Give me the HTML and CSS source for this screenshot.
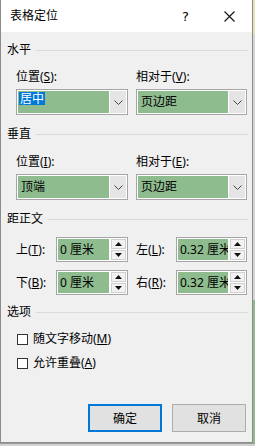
FILE: index.html
```html
<!DOCTYPE html>
<html lang="zh">
<head>
<meta charset="utf-8">
<link rel="stylesheet" href="styles.css">
</head>
<body>
<div class="screen">
  <div class="row">
    <div class="dialog">
      <div class="titlebar">
        <span class="title">表格定位</span>
        <span class="tbtn help">?</span>
        <span class="tbtn close"><svg width="11" height="11" viewBox="0 0 11 11"><path d="M0.5 0.5 L10.5 10.5 M10.5 0.5 L0.5 10.5" stroke="#111" stroke-width="1.1" fill="none"/></svg></span>
      </div>
      <div class="content">
        <div class="ghead g1"><span>水平</span><i></i></div>
        <div class="pair">
          <div class="field">
            <div class="lbl">位置(<u>S</u>):</div>
            <div class="select">
              <div class="val edit"><span class="sel">居中</span></div>
              <div class="drop"><svg width="9" height="5" viewBox="0 0 9 5"><path d="M0.5 0.5 L4.5 4.5 L8.5 0.5" stroke="#444" stroke-width="1" fill="none"/></svg></div>
            </div>
          </div>
          <div class="field">
            <div class="lbl">相对于(<u>V</u>):</div>
            <div class="select">
              <div class="val"><span class="txt">页边距</span></div>
              <div class="drop"><svg width="9" height="5" viewBox="0 0 9 5"><path d="M0.5 0.5 L4.5 4.5 L8.5 0.5" stroke="#444" stroke-width="1" fill="none"/></svg></div>
            </div>
          </div>
        </div>

        <div class="ghead g2"><span>垂直</span><i></i></div>
        <div class="pair p2">
          <div class="field">
            <div class="lbl">位置(<u>I</u>):</div>
            <div class="select">
              <div class="val"><span class="txt">顶端</span></div>
              <div class="drop"><svg width="9" height="5" viewBox="0 0 9 5"><path d="M0.5 0.5 L4.5 4.5 L8.5 0.5" stroke="#444" stroke-width="1" fill="none"/></svg></div>
            </div>
          </div>
          <div class="field">
            <div class="lbl">相对于(<u>E</u>):</div>
            <div class="select">
              <div class="val"><span class="txt">页边距</span></div>
              <div class="drop"><svg width="9" height="5" viewBox="0 0 9 5"><path d="M0.5 0.5 L4.5 4.5 L8.5 0.5" stroke="#444" stroke-width="1" fill="none"/></svg></div>
            </div>
          </div>
        </div>

        <div class="ghead g3"><span>距正文</span><i></i></div>
        <div class="pair s1">
          <div class="sfield">
            <span class="slbl">上(<u>T</u>):</span>
            <div class="spin">
              <div class="sval">0 厘米</div>
              <div class="arrows">
                <span class="arr"><svg width="7" height="4" viewBox="0 0 7 4"><path d="M3.5 0 L7 4 L0 4 Z" fill="#111"/></svg></span>
                <span class="arr"><svg width="7" height="4" viewBox="0 0 7 4"><path d="M0 0 L7 0 L3.5 4 Z" fill="#111"/></svg></span>
              </div>
            </div>
          </div>
          <div class="sfield">
            <span class="slbl">左(<u>L</u>):</span>
            <div class="spin">
              <div class="sval">0.32 厘米</div>
              <div class="arrows">
                <span class="arr"><svg width="7" height="4" viewBox="0 0 7 4"><path d="M3.5 0 L7 4 L0 4 Z" fill="#111"/></svg></span>
                <span class="arr"><svg width="7" height="4" viewBox="0 0 7 4"><path d="M0 0 L7 0 L3.5 4 Z" fill="#111"/></svg></span>
              </div>
            </div>
          </div>
        </div>
        <div class="pair s2">
          <div class="sfield">
            <span class="slbl">下(<u>B</u>):</span>
            <div class="spin">
              <div class="sval">0 厘米</div>
              <div class="arrows">
                <span class="arr"><svg width="7" height="4" viewBox="0 0 7 4"><path d="M3.5 0 L7 4 L0 4 Z" fill="#111"/></svg></span>
                <span class="arr"><svg width="7" height="4" viewBox="0 0 7 4"><path d="M0 0 L7 0 L3.5 4 Z" fill="#111"/></svg></span>
              </div>
            </div>
          </div>
          <div class="sfield">
            <span class="slbl">右(<u>R</u>):</span>
            <div class="spin">
              <div class="sval">0.32 厘米</div>
              <div class="arrows">
                <span class="arr"><svg width="7" height="4" viewBox="0 0 7 4"><path d="M3.5 0 L7 4 L0 4 Z" fill="#111"/></svg></span>
                <span class="arr"><svg width="7" height="4" viewBox="0 0 7 4"><path d="M0 0 L7 0 L3.5 4 Z" fill="#111"/></svg></span>
              </div>
            </div>
          </div>
        </div>

        <div class="ghead g4"><span>选项</span><i></i></div>
        <div class="check c1"><span class="box"></span><span>随文字移动(<u>M</u>)</span></div>
        <div class="check c2"><span class="box"></span><span>允许重叠(<u>A</u>)</span></div>

        <div class="buttons">
          <button class="btn primary">确定</button>
          <button class="btn">取消</button>
        </div>
      </div>
    </div>
    <div class="edge"></div>
  </div>
  <div class="bottom"></div>
</div>
</body>
</html>
```

FILE: styles.css
```css
* { box-sizing: border-box; }
html, body { margin: 0; padding: 0; }
body {
  width: 255px;
  height: 446px;
  overflow: hidden;
  font-family: "Noto Sans", "Noto Sans CJK SC", sans-serif;
  font-size: 12px;
  color: #000;
  background: #c8c8c8;
}
.screen { display: flex; flex-direction: column; width: 255px; height: 446px; }
.row { display: flex; height: 443px; }
.edge {
  width: 2px;
  background: linear-gradient(to bottom, #e8e2b4 0, #e8e2b4 34px, #d6d6d6 34px, #d6d6d6 300px, #8fbc8f 300px);
}
.bottom { height: 3px; background: #d2d2d2; border-top: 1px solid #9a9a9a; }

.dialog {
  width: 253px;
  height: 443px;
  border: 1px solid #8c8c8c;
  border-top: none;
  background: #f0f0f0;
  display: flex;
  flex-direction: column;
}
.titlebar {
  height: 32px;
  background: #fff;
  display: flex;
  align-items: center;
  flex: none;
}
.title { padding-left: 9px; font-size: 12px; line-height: 16px; }
.tbtn { width: 46px; height: 32px; display: flex; align-items: center; justify-content: center; }
.help { margin-left: auto; padding-left: 5px; font-family: "DejaVu Sans", sans-serif; font-size: 13px; }
.close { padding-top: 1px; }

.content {
  flex: 1;
  display: flex;
  flex-direction: column;
  padding: 0 4px 10px 6px;
}
.ghead { display: flex; align-items: center; line-height: 16px; height: 16px; }
.ghead i { flex: 1; height: 1px; background: #dadada; margin-left: 5px; }
.g1 { margin-top: 10px; }
.g2 { margin-top: 11px; }
.g3 { margin-top: 11px; }
.g4 { margin-top: 9px; }

.pair {
  display: grid;
  grid-template-columns: 112px 111px;
  column-gap: 8px;
  padding-left: 9px;
}
.field { display: flex; flex-direction: column; }
.lbl { line-height: 16px; height: 16px; margin-top: 11px; }
.p2 .lbl { margin-top: 12px; }
.select {
  margin-top: 4px;
  height: 26px;
  border: 1px solid #a6a6a6;
  background: #fff;
  padding: 1px;
  display: flex;
}
.val {
  flex: 1;
  background: #8fbc8f;
  padding-left: 1px;
  display: flex;
  align-items: center;
}
.val.edit { align-items: flex-start; padding-top: 1px; }
.txt { padding: 0 2px; line-height: 16px; }
.sel { background: #0078d7; color: #fff; line-height: 13px; height: 13px; padding: 0 1px; }
.drop {
  width: 16px;
  margin-left: 1px;
  background: #e5e5e5;
  display: flex;
  align-items: center;
  justify-content: center;
}

.s1 { margin-top: 10px; }
.s2 { margin-top: 8px; }
.sfield { display: flex; align-items: center; justify-content: space-between; }
.slbl { line-height: 16px; }
.spin {
  width: 72px;
  height: 25px;
  border: 1px solid #a6a6a6;
  background: #fff;
  padding: 1px;
  display: flex;
}
.sfield:last-child .spin { width: 71px; }
.sval {
  flex: 1;
  min-width: 0;
  background: #8fbc8f;
  padding-left: 2px;
  line-height: 21px;
  white-space: nowrap;
  overflow: hidden;
}
.arrows { width: 15px; margin-left: 2px; display: flex; flex-direction: column; gap: 1px; }
.arr {
  flex: 1;
  background: #f2f2f2;
  border: 1px solid #d0d0d0;
  display: flex;
  align-items: center;
  justify-content: center;
}

.check { display: flex; align-items: center; padding-left: 10px; line-height: 16px; height: 16px; }
.c1 { margin-top: 11px; }
.c2 { margin-top: 8px; }
.box { width: 11px; height: 11px; border: 1px solid #333; background: #fff; margin-right: 5px; }

.buttons { margin-top: auto; display: flex; justify-content: flex-end; gap: 10px; padding-right: 2px; }
.btn {
  width: 74px;
  height: 28px;
  border: 1px solid #adadad;
  background: #e1e1e1;
  font-family: "Noto Sans", "Noto Sans CJK SC", sans-serif;
  font-size: 12px;
  color: #000;
  padding: 0;
}
.btn.primary { border: 2px solid #0078d7; }
```
